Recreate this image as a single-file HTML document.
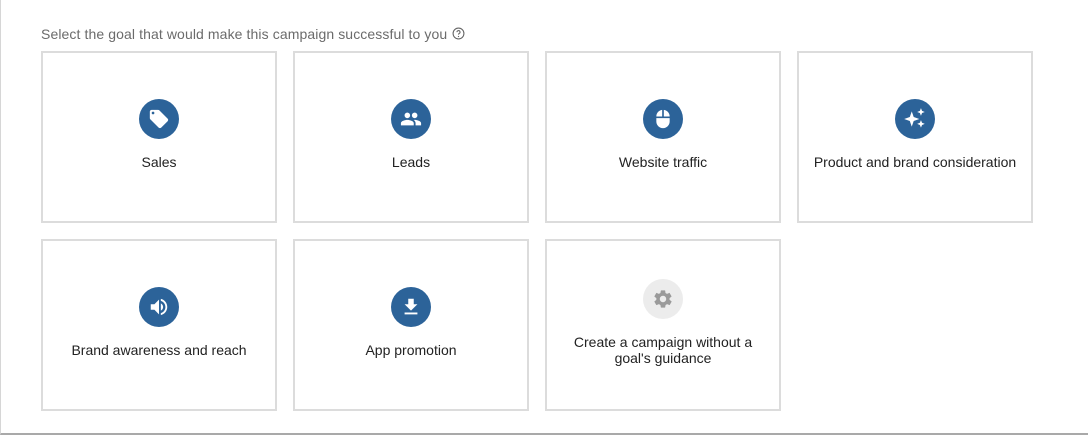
<!DOCTYPE html>
<html><head><meta charset="utf-8"><style>
*{margin:0;padding:0;box-sizing:border-box}
body{width:1088px;height:437px;background:#fff;font-family:"Liberation Sans",Arial,sans-serif;position:relative;overflow:hidden}
.wrap{position:absolute;left:0;top:0;width:1088px;height:435px;border-left:1px solid #d6d6d6;border-bottom:2px solid #a9a9a9}
.title{position:absolute;left:40px;top:26px;font-size:14px;color:#6b6b6b;letter-spacing:0.1px}
.title svg{vertical-align:-1px;margin-left:5px}
.card{position:absolute;width:236px;height:172px;border:2px solid #dcdcdc;background:#fff}
.ic{position:absolute;left:96px;width:40px;height:40px;border-radius:50%;background:#2c6399;display:flex;align-items:center;justify-content:center}
.lbl{position:absolute;left:0;width:232px;text-align:center;font-size:14px;color:#222;line-height:16px}
</style></head><body><div class="wrap">
<div class="title">Select the goal that would make this campaign successful to you<svg width="13" height="13" viewBox="0 0 24 24"><circle cx="12" cy="12" r="10" fill="none" stroke="#666" stroke-width="2"/><path d="M9.2 9.5a2.8 2.8 0 1 1 4 2.5c-.9.5-1.2 1-1.2 2" fill="none" stroke="#666" stroke-width="2"/><circle cx="12" cy="17.5" r="1.2" fill="#666"/></svg></div>

<div class="card" style="left:40px;top:51px"><div class="ic" style="top:46px"><svg width="22" height="22" viewBox="0 0 24 24"><path fill="#fff" d="M21.4 11.6l-9-9C12.1 2.2 11.6 2 11 2H4c-1.1 0-2 .9-2 2v7c0 .6.2 1.1.6 1.4l9 9c.4.4.9.6 1.4.6s1-.2 1.4-.6l7-7c.4-.4.6-.9.6-1.4s-.2-1-.6-1.4zM5.5 7C4.7 7 4 6.3 4 5.5S4.7 4 5.5 4 7 4.7 7 5.5 6.3 7 5.5 7z"/></svg></div><div class="lbl" style="top:101px">Sales</div></div>

<div class="card" style="left:292px;top:51px"><div class="ic" style="top:46px"><svg width="22" height="22" viewBox="0 0 24 24"><path fill="#fff" d="M16 11c1.7 0 3-1.3 3-3s-1.3-3-3-3-3 1.3-3 3 1.3 3 3 3zm-8 0c1.7 0 3-1.3 3-3S9.7 5 8 5 5 6.3 5 8s1.3 3 3 3zm0 2c-2.3 0-7 1.2-7 3.5V19h14v-2.5C15 14.2 10.3 13 8 13zm8 0c-.3 0-.6 0-1 .1 1.2.8 2 2 2 3.4V19h6v-2.5c0-2.3-4.7-3.5-7-3.5z"/></svg></div><div class="lbl" style="top:101px">Leads</div></div>

<div class="card" style="left:544px;top:51px"><div class="ic" style="top:46px"><svg width="20" height="20" viewBox="0 0 24 24"><path fill="#fff" d="M13 1.1V9h7c0-4.1-3-7.4-7-7.9zM4 15c0 4.4 3.6 8 8 8s8-3.6 8-8v-4H4v4zM11 1.1C7 1.6 4 4.9 4 9h7V1.1z"/></svg></div><div class="lbl" style="top:101px">Website traffic</div></div>

<div class="card" style="left:796px;top:51px"><div class="ic" style="top:46px"><svg width="26" height="26" viewBox="0 0 24 24"><path fill="#fff" d="M9 5l1.8 5.2L16 12l-5.2 1.8L9 19l-1.8-5.2L2 12l5.2-1.8z M17.5 2l1 2.5 2.5 1-2.5 1-1 2.5-1-2.5-2.5-1 2.5-1z M17.5 13l1 2.5 2.5 1-2.5 1-1 2.5-1-2.5-2.5-1 2.5-1z"/></svg></div><div class="lbl" style="top:101px">Product and brand consideration</div></div>

<div class="card" style="left:40px;top:239px"><div class="ic" style="top:46px"><svg width="22" height="22" viewBox="0 0 24 24"><path fill="#fff" d="M3 9v6h4l5 5V4L7 9H3zm13.5 3c0-1.8-1-3.3-2.5-4v8c1.5-.7 2.5-2.2 2.5-4zM14 3.2v2.1c2.9.9 5 3.5 5 6.7s-2.1 5.8-5 6.7v2.1c4-.9 7-4.5 7-8.8s-3-7.9-7-8.8z"/></svg></div><div class="lbl" style="top:101px">Brand awareness and reach</div></div>

<div class="card" style="left:292px;top:239px"><div class="ic" style="top:46px"><svg width="22" height="22" viewBox="0 0 24 24"><path fill="#fff" d="M19 9h-4V3H9v6H5l7 7 7-7zM5 18v2h14v-2H5z"/></svg></div><div class="lbl" style="top:101px">App promotion</div></div>

<div class="card" style="left:544px;top:239px"><div class="ic" style="top:38px;background:#ececec"><svg width="22" height="22" viewBox="0 0 24 24"><path fill="#9a9a9a" d="M19.1 12.9c0-.3.1-.6.1-.9s0-.6-.1-.9l2-1.6c.2-.1.2-.4.1-.6l-1.9-3.3c-.1-.2-.4-.3-.6-.2l-2.4 1c-.5-.4-1-.7-1.6-.9L14.4 3c0-.2-.2-.4-.5-.4h-3.8c-.2 0-.4.2-.5.4l-.4 2.5c-.6.2-1.1.6-1.6.9l-2.4-1c-.2-.1-.5 0-.6.2L2.7 8.9c-.1.2-.1.5.1.6l2 1.6c0 .3-.1.6-.1.9s0 .6.1.9l-2 1.6c-.2.1-.2.4-.1.6l1.9 3.3c.1.2.4.3.6.2l2.4-1c.5.4 1 .7 1.6.9l.4 2.5c0 .2.2.4.5.4h3.8c.2 0 .4-.2.5-.4l.4-2.5c.6-.2 1.1-.6 1.6-.9l2.4 1c.2.1.5 0 .6-.2l1.9-3.3c.1-.2.1-.5-.1-.6l-2-1.6zM12 15.5c-1.9 0-3.5-1.6-3.5-3.5s1.6-3.5 3.5-3.5 3.5 1.6 3.5 3.5-1.6 3.5-3.5 3.5z"/></svg></div><div class="lbl" style="top:93px">Create a campaign without a<br>goal's guidance</div></div>
</div></body></html>
